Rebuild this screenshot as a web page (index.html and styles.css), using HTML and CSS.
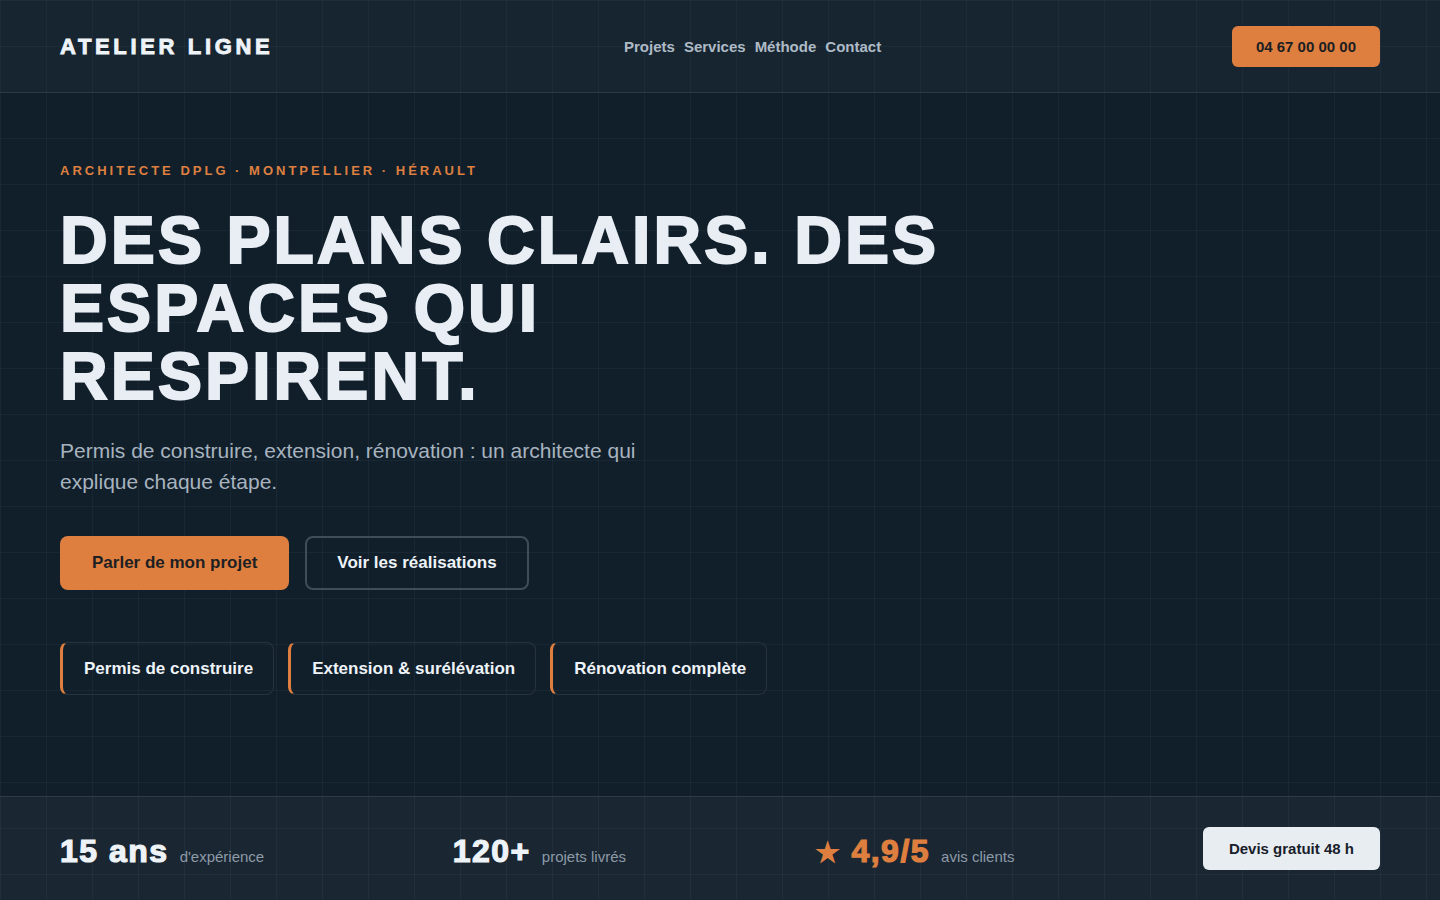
FILE: index.html
```html
<!DOCTYPE html>
<html lang="fr">
<head>
<meta charset="utf-8">
<title>Atelier Ligne</title>
<link rel="stylesheet" href="styles.css">
</head>
<body>
<div class="page">
  <header class="topbar grid">
    <div class="logo">ATELIER LIGNE</div>
    <nav class="nav">
      <a href="#">Projets</a>
      <a href="#">Services</a>
      <a href="#">Méthode</a>
      <a href="#">Contact</a>
    </nav>
    <a class="phone" href="#">04 67 00 00 00</a>
  </header>

  <main class="hero grid">
    <p class="eyebrow">ARCHITECTE DPLG · MONTPELLIER · HÉRAULT</p>
    <h1 class="title">DES PLANS CLAIRS. DES ESPACES QUI RESPIRENT.</h1>
    <p class="lead">Permis de construire, extension, rénovation : un architecte qui explique chaque étape.</p>
    <div class="actions">
      <a class="btn btn-primary" href="#">Parler de mon projet</a>
      <a class="btn btn-ghost" href="#">Voir les réalisations</a>
    </div>
    <div class="chips">
      <span class="chip">Permis de construire</span>
      <span class="chip">Extension &amp; surélévation</span>
      <span class="chip">Rénovation complète</span>
    </div>
  </main>

  <section class="stats grid">
    <div class="stat"><span class="num">15 ans</span><span class="label">d'expérience</span></div>
    <div class="stat"><span class="num">120+</span><span class="label">projets livrés</span></div>
    <div class="stat"><span class="num accent"><span class="star">★</span> 4,9/5</span><span class="label">avis clients</span></div>
    <a class="quote" href="#">Devis gratuit 48 h</a>
  </section>
</div>
</body>
</html>
```

FILE: styles.css
```css
* { box-sizing: border-box; }
html, body { margin: 0; padding: 0; }
body {
  font-family: "Liberation Sans", Arial, sans-serif;
  background: #111f2b;
  color: #e8eef4;
}
a { text-decoration: none; color: inherit; }

.page {
  height: 100vh;
  display: flex;
  flex-direction: column;
}

.grid {
  background-image:
    linear-gradient(rgba(190, 215, 235, 0.045) 1px, transparent 1px),
    linear-gradient(90deg, rgba(190, 215, 235, 0.045) 1px, transparent 1px);
  background-size: 46px 46px;
  background-attachment: fixed;
}

.topbar {
  background-color: #172530;
  height: 93px;
  border-bottom: 1px solid #2a3945;
  display: flex;
  align-items: center;
  justify-content: space-between;
  padding: 0 60px;
  flex: none;
}
.logo {
  font-size: 22px;
  font-weight: 800;
  letter-spacing: 3.65px;
  -webkit-text-stroke: 0.9px #eef3f8;
  color: #eef3f8;
  margin-top: 2px;
}
.nav {
  display: flex;
  gap: 9px;
  font-size: 15px;
  font-weight: 700;
  color: #aebbc7;
}
.phone {
  background: #de7f3f;
  color: #1b1e22;
  font-size: 15px;
  font-weight: 700;
  height: 41px;
  padding: 0 24px;
  border-radius: 6px;
  display: flex;
  align-items: center;
}

.hero {
  background-color: #111f2b;
  flex: 1;
  padding: 70px 60px 0;
}
.eyebrow {
  margin: 0;
  font-size: 13px;
  line-height: 16px;
  font-weight: 700;
  letter-spacing: 3px;
  color: #de7f3f;
}
.title {
  margin: 27px 0 0;
  font-size: 66px;
  line-height: 68px;
  font-weight: 800;
  letter-spacing: 3.1px;
  -webkit-text-stroke: 2px #e8eef4;
  color: #e8eef4;
  max-width: 900px;
}
.lead {
  margin: 25px 0 0;
  font-size: 21px;
  line-height: 31px;
  color: #a7b3bf;
  max-width: 620px;
}
.actions {
  display: flex;
  gap: 16px;
  margin-top: 39px;
}
.btn {
  height: 54px;
  border-radius: 8px;
  display: flex;
  align-items: center;
  font-size: 17px;
  font-weight: 700;
}
.btn-primary {
  background: #de7f3f;
  color: #1d1f22;
  padding: 0 32px;
}
.btn-ghost {
  border: 2px solid #3f4d5a;
  color: #eef3f8;
  padding: 0 30px;
}
.chips {
  display: flex;
  gap: 14px;
  margin-top: 52px;
}
.chip {
  height: 53px;
  display: flex;
  align-items: center;
  padding: 0 20px 0 21px;
  border: 1px solid #27343f;
  border-left: 3px solid #de7f3f;
  border-radius: 8px;
  font-size: 17px;
  font-weight: 700;
  color: #eef3f8;
}

.stats {
  background-color: #1a2733;
  border-top: 1px solid #2e3c48;
  height: 104px;
  flex: none;
  display: flex;
  align-items: center;
  justify-content: space-between;
  padding: 0 60px;
}
.stat {
  display: flex;
  align-items: baseline;
  gap: 11px;
  margin-top: 6px;
}
.num {
  font-size: 32px;
  font-weight: 800;
  letter-spacing: 1.5px;
  -webkit-text-stroke: 1.2px #eef3f8;
  color: #eef3f8;
}
.num.accent {
  color: #de7f3f;
  -webkit-text-stroke: 1.2px #de7f3f;
}
.star { font-size: 28px; -webkit-text-stroke: 0; }
.label {
  font-size: 15px;
  color: #8d9aa7;
}
.quote {
  background: #e8edf2;
  color: #18202a;
  font-size: 15px;
  font-weight: 700;
  height: 43px;
  padding: 0 26px;
  border-radius: 6px;
  display: flex;
  align-items: center;
}
```
